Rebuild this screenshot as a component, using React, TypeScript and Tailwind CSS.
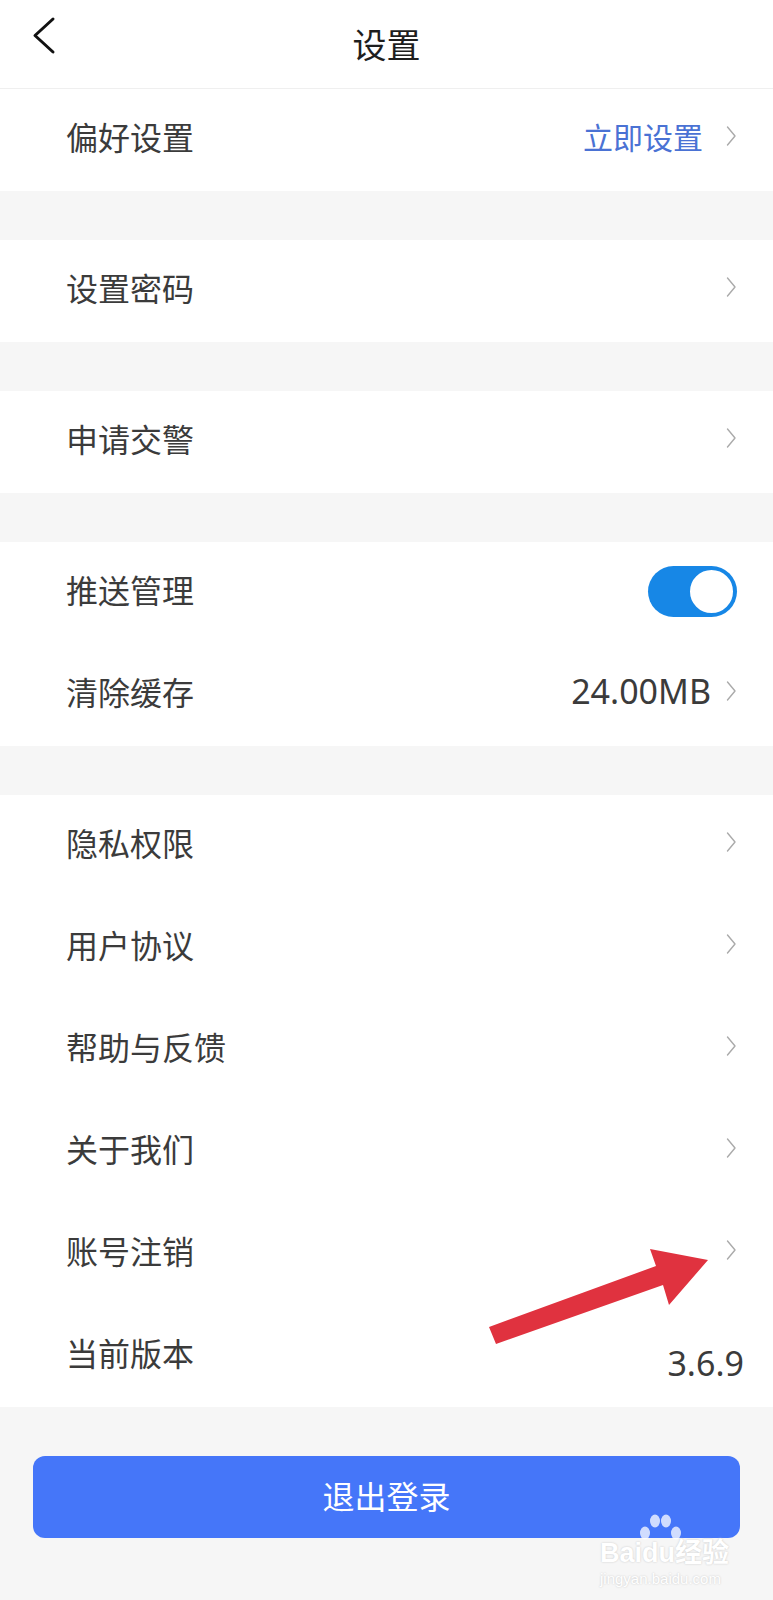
import React from 'react';

const font = { fontFamily: '"Noto Sans CJK SC", "Noto Sans", sans-serif' };

const Chevron = () => (
  <svg width="12" height="22" viewBox="0 0 12 22" className="shrink-0">
    <path d="M2.5 2 L10 11 L2.5 20" fill="none" stroke="#aaaaaa" strokeWidth="1.4" strokeLinecap="round" strokeLinejoin="round" />
  </svg>
);

const Row = ({ label, right, chevron = true }: { label: string; right?: React.ReactNode; chevron?: boolean }) => (
  <div className="h-[102px] flex items-center pl-[66px] pr-[36px] pb-[8px] bg-white">
    <span className="text-[32px] text-[#3b3b3b] leading-none">{label}</span>
    <div className="ml-auto flex items-center gap-[22px]">
      {right}
      {chevron && <Chevron />}
    </div>
  </div>
);

const Gap = () => <div className="h-[49px] bg-[#f6f6f6]" />;

const Toggle = () => (
  <div className="w-[89px] h-[51px] rounded-full bg-[#1787e6] flex items-center justify-end p-[2px] mt-[4px]">
    <div className="w-[47px] h-[47px] rounded-full bg-white border-[2px] border-[#1787e6]" />
  </div>
);

const num = { fontFamily: '"Noto Sans", sans-serif' };
const mark = { fontFamily: '"Liberation Sans", "Noto Sans CJK SC", sans-serif', textShadow: '0 0 2px #c4c4c4' };

export default function App() {
  return (
    <div className="relative w-[773px] h-[1600px] bg-[#f6f6f6] overflow-hidden" style={font}>
      {/* Header */}
      <div className="relative h-[89px] bg-white border-b border-[#efefef] flex items-center justify-center">
        <svg width="30" height="44" viewBox="0 0 30 44" className="absolute left-[28px] top-[14px]">
          <path d="M25 5 L7 21.5 L25 38" fill="none" stroke="#111" strokeWidth="3" strokeLinecap="round" strokeLinejoin="round" />
        </svg>
        <span className="text-[34px] text-[#1e1e1e] leading-none">设置</span>
      </div>

      <Row label="偏好设置" right={<span className="text-[30px] text-[#4a72d4] leading-none">立即设置</span>} />
      <Gap />
      <Row label="设置密码" />
      <Gap />
      <Row label="申请交警" />
      <Gap />
      <div>
        <Row label="推送管理" chevron={false} right={<Toggle />} />
        <Row
          label="清除缓存"
          right={<span className="text-[34px] text-[#3b3b3b] leading-none mr-[-8px]" style={num}>24.00MB</span>}
        />
      </div>
      <Gap />
      <div>
        <Row label="隐私权限" />
        <Row label="用户协议" />
        <Row label="帮助与反馈" />
        <Row label="关于我们" />
        <Row label="账号注销" />
        <div className="h-[102px] flex items-center pl-[66px] pr-[29px] pb-[8px] bg-white">
          <span className="text-[32px] text-[#3b3b3b] leading-none">当前版本</span>
          <span className="ml-auto pt-[22px] text-[34px] text-[#3b3b3b] leading-none" style={num}>3.6.9</span>
        </div>
      </div>

      {/* Logout */}
      <div className="px-[33px] pt-[49px]">
        <button className="w-full h-[82px] rounded-[12px] bg-[#4576f9] text-white text-[32px] leading-none pb-[4px]">退出登录</button>
      </div>

      {/* Red annotation arrow */}
      <svg width="240" height="110" viewBox="480 1240 240 110" className="absolute left-[480px] top-[1240px]">
        <polygon points="489,1327 656,1266 650,1249 708,1260 669,1305 663,1285 496,1344" fill="#e0323f" />
      </svg>

      {/* Watermark */}
      <div className="absolute left-[600px] top-[1514px] w-[140px] flex flex-col pointer-events-none">
        <svg width="44" height="30" viewBox="0 0 44 30" className="ml-[38px]">
          <ellipse cx="17" cy="7" rx="5" ry="6.5" fill="#ffffff" fillOpacity="0.75" />
          <ellipse cx="28" cy="7" rx="5" ry="6.5" fill="#ffffff" fillOpacity="0.75" />
          <ellipse cx="7" cy="19" rx="5" ry="6.5" fill="#ffffff" fillOpacity="0.75" />
          <ellipse cx="38" cy="19" rx="5" ry="6.5" fill="#ffffff" fillOpacity="0.75" />
        </svg>
        <div className="text-[27px] leading-none text-white font-bold whitespace-nowrap mt-[-4px]" style={mark}>Baidu经验</div>
        <div className="text-[15px] leading-none text-white whitespace-nowrap mt-[4px]" style={mark}>jingyan.baidu.com</div>
      </div>
    </div>
  );
}
